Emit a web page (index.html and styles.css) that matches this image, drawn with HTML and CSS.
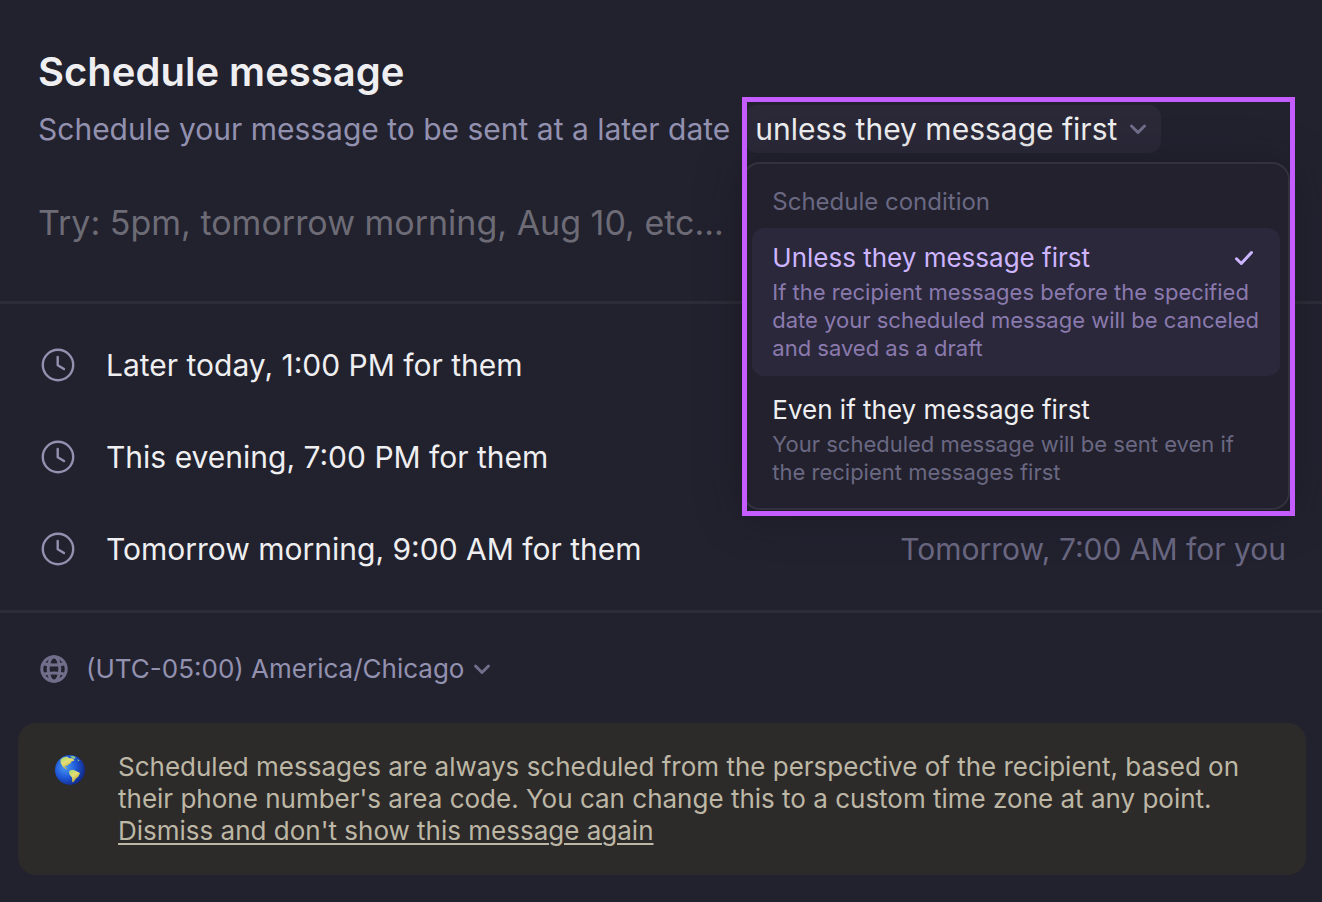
FILE: index.html
```html
<!DOCTYPE html>
<html lang="en">
<head>
<meta charset="utf-8">
<meta name="viewport" content="width=device-width, initial-scale=1">
<title>Schedule message</title>
<link rel="stylesheet" href="styles.css">
</head>
<body>
<svg class="sprite" aria-hidden="true">
  <symbol id="clock" viewBox="0 0 36 36"><circle cx="18" cy="18" r="15.2"/><path d="M17.7 10v8.2l6.3 3.9"/></symbol>
  <symbol id="chevron" viewBox="0 0 18 18"><path d="M2.500 6 9 12.500 15.500 6"/></symbol>
</svg>
<main class="dialog">
  <header class="header">
    <h1 class="title">Schedule message</h1>
    <div class="subtitle">
      <span>Schedule your message to be sent at a later date</span>
      <div class="condition">
        <button class="trigger" type="button" aria-expanded="true">unless they message first
          <svg class="chevron"><use href="#chevron"/></svg>
        </button>
        <div class="menu" role="menu" aria-labelledby="menu-label">
          <div class="menu-label" id="menu-label">Schedule condition</div>
          <button class="option selected" type="button" role="menuitemradio" aria-checked="true">
            <span class="option-title">Unless they message first
              <svg class="check" viewBox="0 0 22 22"><path d="M3.500 11.800 8.300 16.500 18.500 5.500"/></svg>
            </span>
            <span class="option-text">If the recipient messages before the specified date your scheduled message will be canceled and saved as a draft</span>
          </button>
          <button class="option" type="button" role="menuitemradio" aria-checked="false">
            <span class="option-title">Even if they message first</span>
            <span class="option-text">Your scheduled message will be sent even if the recipient messages first</span>
          </button>
        </div>
        <div class="highlight"></div>
      </div>
    </div>
    <input class="when" type="text" aria-label="When to send" placeholder="Try: 5pm, tomorrow morning, Aug 10, etc...">
  </header>
  <section class="times">
    <button class="time" type="button"><svg class="clock"><use href="#clock"/></svg><span>Later today, 1:00 PM for them</span></button>
    <button class="time" type="button"><svg class="clock"><use href="#clock"/></svg><span>This evening, 7:00 PM for them</span></button>
    <button class="time" type="button"><svg class="clock"><use href="#clock"/></svg><span>Tomorrow morning, 9:00 AM for them</span><span class="local">Tomorrow, 7:00 AM for you</span></button>
  </section>
  <footer class="footer">
    <button class="zone" type="button">
      <svg class="globe" viewBox="0 0 28 28"><circle cx="14" cy="14" r="12.200"/><ellipse cx="14" cy="14" rx="5.800" ry="12.200"/><path d="M3.500 8.500C8 10.400 20 10.400 24.500 8.500M3.500 19.500C8 17.600 20 17.600 24.500 19.500"/></svg>
      <span>(UTC-05:00) America/Chicago</span>
      <svg class="chevron"><use href="#chevron"/></svg>
    </button>
    <aside class="notice">
      <svg class="earth" viewBox="0 0 30 30" aria-hidden="true">
        <defs>
          <radialGradient id="sea" cx=".35" cy=".4" r=".68"><stop offset="0" stop-color="#4c9cf0"/><stop offset=".5" stop-color="#205bdb"/><stop offset="1" stop-color="#102784"/></radialGradient>
          <linearGradient id="land" x1="0" y1="0" x2=".6" y2="1"><stop offset="0" stop-color="#9fd873"/><stop offset=".5" stop-color="#e5df75"/><stop offset="1" stop-color="#b99f2c"/></linearGradient>
        </defs>
        <circle cx="15" cy="15" r="15" fill="url(#sea)"/>
        <path fill="url(#land)" d="M5.500 4.500 8 2.500 12 1.500 14 3 18 3.500 19.500 5.500 16.500 6.500 15.500 8.500 13.500 9.500 11.500 11 10.500 10.700 9.500 12 11 12.500 12.500 14.500 10.500 13.800 8 12 6.500 9.500 5.500 7.500Z"/>
        <path fill="#8ecb87" d="M15 .7 19 1.200 20.800 2.500 19.500 4 16.500 2.400ZM22 4 24.500 5.500 23.500 6.500Z"/>
        <path fill="url(#land)" d="M15 15.200 18.500 14.700 21 16 25 18 23.500 21.500 21 23.500 18.500 27 17.300 27.300 17 22.500 14.500 19.500 14 17Z"/>
      </svg>
      <p class="notice-text">Scheduled messages are always scheduled from the perspective of the recipient, based on their phone number's area code. You can change this to a custom time zone at any point. <a class="dismiss" href="#">Dismiss and don't show this message again</a></p>
    </aside>
  </footer>
</main>
</body>
</html>
```
FILE: styles.css
```css
* { box-sizing: border-box; }
body {
  margin: 0;
  background: #22212e;
  color: #efeff1;
  font: 30px/40px Inter, "Liberation Sans", sans-serif;
}
button, input {
  border: 0;
  margin: 0;
  padding: 0;
  background: none;
  color: inherit;
  font: inherit;
  text-align: left;
}
button { cursor: pointer; }
svg { flex: none; fill: none; stroke: currentColor; }
.sprite { position: absolute; width: 0; height: 0; }
.header {
  padding: 48px 38px 48px;
  border-bottom: 3px solid #2d2c38;
}
.title { margin: 0; font-size: 40px; line-height: 48px; font-weight: 600; }
.subtitle {
  display: flex;
  align-items: center;
  gap: 15px;
  margin-top: 9px;
  color: #9391b0;
  white-space: nowrap;
}
.condition { position: relative; }
.trigger {
  display: flex;
  align-items: center;
  gap: 12px;
  height: 48px;
  padding: 0 14px 0 10px;
  border-radius: 12px;
  background: #2b2938;
  color: #efeff1;
}
.chevron {
  width: 18px;
  height: 18px;
  color: #706e8a;
  stroke-width: 3;
  stroke-linecap: round;
  stroke-linejoin: round;
}
.menu {
  position: absolute;
  z-index: 1;
  top: 57px;
  left: -3px;
  width: 548px;
  padding: 8px;
  border: 2px solid #32313d;
  border-radius: 18px;
  background: #22212d;
  box-shadow: 0 4px 40px rgba(20, 22, 28, .55);
  white-space: normal;
}
.menu-label { padding: 14px 20px 10px; color: #6a6882; font-size: 24px; line-height: 32px; }
.option {
  display: block;
  width: 100%;
  padding: 14px 20px;
  border-radius: 12px;
  color: #efeff1;
}
.option + .option { margin-top: 4px; }
.option-title {
  display: flex;
  align-items: center;
  justify-content: space-between;
  margin-bottom: 4px;
  font-size: 26px;
  line-height: 32px;
}
.option-text { display: block; color: #6a6882; font-size: 22px; line-height: 28px; }
.selected { background: #2b283b; color: #ceb5ff; }
.selected .option-text { color: #8a7aae; }
.check { width: 22px; height: 22px; margin-right: 5px; stroke-width: 3; stroke-linecap: round; stroke-linejoin: round; }
.highlight {
  position: absolute;
  z-index: 2;
  top: -8px;
  left: -3px;
  width: 553px;
  height: 419px;
  border: 5px solid #c45cff;
  pointer-events: none;
}
.when { display: block; width: 100%; height: 60px; margin-top: 39px; margin-bottom: 1px; font-size: 34px; outline: 0; }
.when::placeholder { color: #6d6c76; opacity: 1; }
.times { padding: 15px 0; border-bottom: 3px solid #2d2c38; }
.time {
  display: flex;
  align-items: center;
  width: 100%;
  height: 92px;
  padding: 0 36px 0 40px;
}
.clock { width: 36px; height: 36px; margin-right: 30px; color: #9391b0; stroke-width: 2.4; stroke-linecap: round; stroke-linejoin: round; }
.local { margin-left: auto; color: #6a6882; }
.footer { padding: 36px 16px 24px 18px; }
.zone {
  display: flex;
  align-items: center;
  height: 40px;
  margin: 0 22px 34px;
  color: #9391b0;
  font-size: 26px;
}
.globe { width: 28px; height: 28px; margin-right: 18px; color: #706e8a; stroke-width: 3; }
.zone .chevron { margin-left: 9px; }
.notice {
  display: flex;
  align-items: flex-start;
  gap: 33px;
  padding: 28px 36px 28px 37px;
  border-radius: 18px;
  background: #2d2a2a;
  color: #bdb7a5;
}
.earth { width: 30px; height: 30px; margin-top: 4px; stroke: none; }
.notice-text { margin: 0; font-size: 26px; line-height: 32px; }
.dismiss { color: inherit; text-decoration: underline; text-decoration-thickness: 2px; text-underline-offset: 3px; }
```
